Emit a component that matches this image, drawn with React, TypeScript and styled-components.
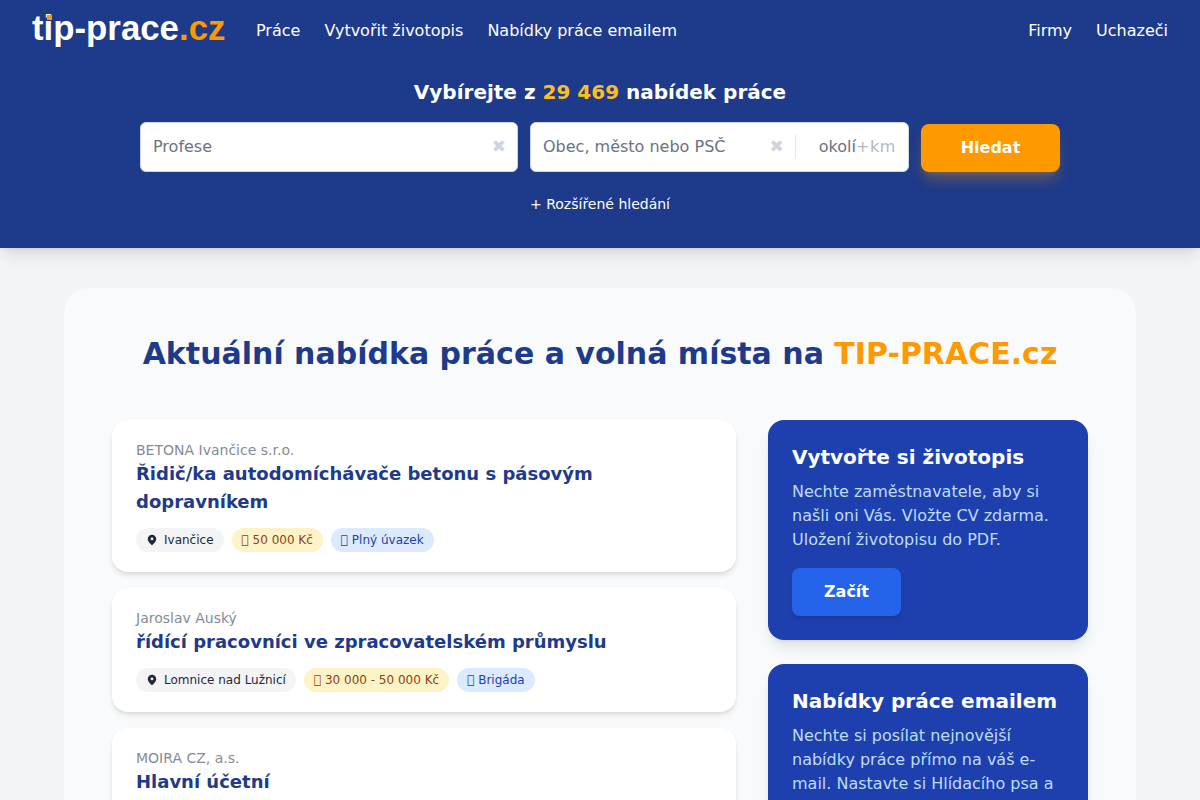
import React from 'react';
import styled, { createGlobalStyle } from 'styled-components';

const GlobalStyle = createGlobalStyle`
  html, body {
    margin: 0;
    padding: 0;
    height: 800px;
    overflow: hidden;
    background: #f3f4f6;
    font-family: "DejaVu Sans", sans-serif;
  }
  * {
    box-sizing: border-box;
  }
`;

const Header = styled.header`
  background: #1e3a8a;
  height: 248px;
  box-shadow: 0 10px 15px -3px rgba(0, 0, 0, 0.1), 0 4px 6px -4px rgba(0, 0, 0, 0.1);
`;

const TopBar = styled.div`
  display: flex;
  align-items: center;
  height: 60px;
  padding: 2px 32px 0;
`;

const Logo = styled.a`
  width: 224px;
  font-family: "Liberation Sans", Arial, sans-serif;
  font-size: 34.8px;
  font-weight: 700;
  color: #fff;
  line-height: 56px;
  margin-top: -6px;
`;

const LogoI = styled.span`
  position: relative;
  &::after {
    content: '';
    position: absolute;
    left: 3px;
    top: 7px;
    width: 5px;
    height: 5px;
    background: #ff9900;
  }
`;

const LogoTld = styled.span`
  color: #ff9900;
`;

const NavGroup = styled.nav<{ $right?: boolean }>`
  display: flex;
  gap: 24px;
  margin-left: ${(p) => (p.$right ? 'auto' : '0')};
`;

const NavLink = styled.a`
  color: #fff;
  font-size: 16px;
  line-height: 24px;
`;

const SearchArea = styled.div`
  display: flex;
  flex-direction: column;
  align-items: center;
  padding-top: 16px;
`;

const Headline = styled.h2`
  margin: 0 0 14px;
  color: #fff;
  font-size: 20px;
  font-weight: 700;
  line-height: 32px;
  strong {
    color: #fbbf24;
  }
`;

const SearchRow = styled.div`
  display: flex;
  align-items: flex-end;
  gap: 12px;
  width: 920px;
`;

const Field = styled.div<{ $width: number }>`
  width: ${(p) => p.$width}px;
  height: 50px;
  display: flex;
  align-items: center;
  padding: 0 12px 2px;
  background: #fff;
  border: 1px solid #d1d5db;
  border-radius: 6px;
  font-size: 16px;
  color: #6b7280;
`;

const Placeholder = styled.span`
  flex: 1;
`;

const Clear = styled.span`
  color: #d1d5db;
  font-size: 17px;
  margin-right: -1px;
`;

const Divider = styled.span`
  width: 1px;
  height: 24px;
  background: #e5e7eb;
  margin: 2px 23px 0 12px;
`;

const KmHint = styled.span`
  color: #b3b9c2;
  letter-spacing: 0.6px;
`;

const SearchButton = styled.button`
  width: 139px;
  height: 48px;
  padding: 0 0 2px;
  border: 0;
  border-radius: 8px;
  background: #ff9900;
  color: #fff;
  font-family: inherit;
  font-size: 16px;
  font-weight: 700;
  box-shadow: 0 10px 15px -3px rgba(255, 153, 0, 0.3), 0 4px 6px -4px rgba(255, 153, 0, 0.3);
`;

const AdvancedLink = styled.a`
  margin-top: 22px;
  color: #fff;
  font-size: 14px;
  line-height: 20px;
`;

const Main = styled.main`
  margin: 40px auto 0;
  width: 1072px;
  padding: 40px 48px;
  background: #f9fafb;
  border-radius: 24px;
  box-shadow: 0 1px 2px rgba(0, 0, 0, 0.04);
`;

const PageTitle = styled.h1`
  margin: 0 0 40px;
  text-align: center;
  color: #1e3a8a;
  font-size: 30px;
  font-weight: 700;
  line-height: 52px;
  span {
    color: #ff9900;
  }
`;

const Columns = styled.div`
  display: grid;
  grid-template-columns: 624px 320px;
  gap: 32px;
  align-items: start;
`;

const JobList = styled.div`
  display: flex;
  flex-direction: column;
  gap: 16px;
`;

const JobCard = styled.article`
  background: #fff;
  border-radius: 16px;
  padding: 20px 24px;
  box-shadow: 0 4px 6px -1px rgba(0, 0, 0, 0.1), 0 2px 4px -2px rgba(0, 0, 0, 0.1);
`;

const Company = styled.div`
  color: #858b96;
  font-size: 14px;
  line-height: 20px;
`;

const JobTitle = styled.h3`
  margin: 0 0 12px;
  color: #1e3a8a;
  font-size: 18px;
  font-weight: 700;
  line-height: 28px;
`;

const Tags = styled.div`
  display: flex;
  gap: 8px;
`;

const tagColors = {
  place: { bg: '#f3f4f6', fg: '#1f2937' },
  salary: { bg: '#fef3c7', fg: '#92400e' },
  type: { bg: '#dbeafe', fg: '#1e40af' },
};

const Tag = styled.span<{ $kind: keyof typeof tagColors }>`
  display: inline-flex;
  align-items: center;
  height: 24px;
  padding: 0 10px;
  border-radius: 12px;
  font-size: 12px;
  white-space: pre;
  background: ${(p) => tagColors[p.$kind].bg};
  color: ${(p) => tagColors[p.$kind].fg};
`;

const Pin = styled.svg`
  width: 12px;
  height: 12px;
  margin-right: 6px;
`;

const Sidebar = styled.aside`
  display: flex;
  flex-direction: column;
  gap: 24px;
`;

const SideCard = styled.section`
  background: #1e40af;
  border-radius: 16px;
  padding: 24px;
  box-shadow: 0 10px 15px -3px rgba(0, 0, 0, 0.1), 0 4px 6px -4px rgba(0, 0, 0, 0.1);
`;

const SideTitle = styled.h3`
  margin: 0 0 10px;
  color: #fff;
  font-size: 20px;
  font-weight: 700;
  line-height: 26px;
`;

const SideText = styled.p`
  margin: 0 0 16px;
  color: #bfdbfe;
  font-size: 16px;
  line-height: 24px;
`;

const SideButton = styled.button`
  width: 109px;
  height: 48px;
  padding: 0 0 2px;
  border: 0;
  border-radius: 8px;
  background: #2563eb;
  color: #fff;
  font-family: inherit;
  font-size: 16px;
  font-weight: 700;
  box-shadow: 0 4px 6px -1px rgba(0, 0, 0, 0.1), 0 2px 4px -2px rgba(0, 0, 0, 0.1);
`;

const PinIcon = () => (
  <Pin viewBox="0 0 24 24" fill="#1f2937">
    <path d="M12 1.5a8.5 8.5 0 0 0-8.5 8.5c0 5.8 8.5 12.5 8.5 12.5s8.5-6.7 8.5-12.5A8.5 8.5 0 0 0 12 1.5zm0 11.2a2.8 2.8 0 1 1 0-5.6 2.8 2.8 0 0 1 0 5.6z" />
  </Pin>
);

// the reference shows missing-glyph boxes in front of salary and contract type
const MISSING_GLYPH = '\uE0F0';

const jobs = [
  {
    company: 'BETONA Ivančice s.r.o.',
    title: 'Řidič/ka autodomíchávače betonu s pásovým dopravníkem',
    place: 'Ivančice',
    salary: '50 000 Kč',
    type: 'Plný úvazek',
  },
  {
    company: 'Jaroslav Auský',
    title: 'řídící pracovníci ve zpracovatelském průmyslu',
    place: 'Lomnice nad Lužnicí',
    salary: '30 000 - 50 000 Kč',
    type: 'Brigáda',
  },
  {
    company: 'MOIRA CZ, a.s.',
    title: 'Hlavní účetní',
    place: 'Praha',
    salary: '60 000 Kč',
    type: 'Plný úvazek',
  },
];

const App: React.FC = () => (
  <>
    <GlobalStyle />
    <Header>
      <TopBar>
        <Logo>
          t<LogoI>i</LogoI>p-prace<LogoTld>.cz</LogoTld>
        </Logo>
        <NavGroup>
          <NavLink>Práce</NavLink>
          <NavLink>Vytvořit životopis</NavLink>
          <NavLink>Nabídky práce emailem</NavLink>
        </NavGroup>
        <NavGroup $right>
          <NavLink>Firmy</NavLink>
          <NavLink>Uchazeči</NavLink>
        </NavGroup>
      </TopBar>
      <SearchArea>
        <Headline>
          Vybírejte z <strong>29 469</strong> nabídek práce
        </Headline>
        <SearchRow>
          <Field $width={378}>
            <Placeholder>Profese</Placeholder>
            <Clear>✖</Clear>
          </Field>
          <Field $width={379}>
            <Placeholder>Obec, město nebo PSČ</Placeholder>
            <Clear>✖</Clear>
            <Divider />
            okolí<KmHint>+km</KmHint>
          </Field>
          <SearchButton>Hledat</SearchButton>
        </SearchRow>
        <AdvancedLink>+ Rozšířené hledání</AdvancedLink>
      </SearchArea>
    </Header>
    <Main>
      <PageTitle>
        Aktuální nabídka práce a volná místa na <span>TIP-PRACE.cz</span>
      </PageTitle>
      <Columns>
        <JobList>
          {jobs.map((job) => (
            <JobCard key={job.company}>
              <Company>{job.company}</Company>
              <JobTitle>{job.title}</JobTitle>
              <Tags>
                <Tag $kind="place">
                  <PinIcon />
                  {job.place}
                </Tag>
                <Tag $kind="salary">{MISSING_GLYPH} {job.salary}</Tag>
                <Tag $kind="type">{MISSING_GLYPH} {job.type}</Tag>
              </Tags>
            </JobCard>
          ))}
        </JobList>
        <Sidebar>
          <SideCard>
            <SideTitle>Vytvořte si životopis</SideTitle>
            <SideText>Nechte zaměstnavatele, aby si našli oni Vás. Vložte CV zdarma. Uložení životopisu do PDF.</SideText>
            <SideButton>Začít</SideButton>
          </SideCard>
          <SideCard>
            <SideTitle>Nabídky práce emailem</SideTitle>
            <SideText>
              Nechte si posílat nejnovější nabídky práce přímo na váš e-mail. Nastavte si Hlídacího psa a již nikdy
              nezmeškáte nabídku.
            </SideText>
          </SideCard>
        </Sidebar>
      </Columns>
    </Main>
  </>
);

export default App;
